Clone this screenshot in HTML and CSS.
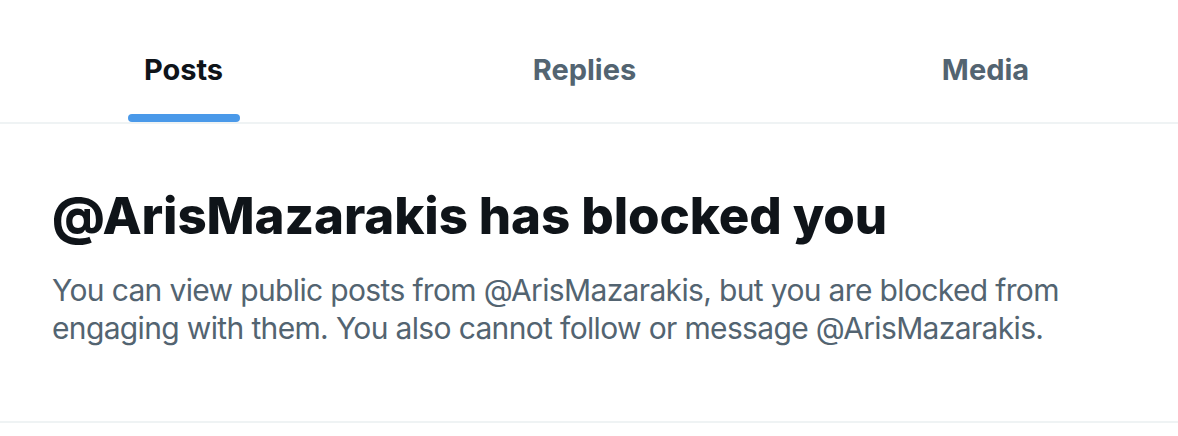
FILE: index.html
```html
<!DOCTYPE html>
<html lang="en">
<head>
<meta charset="utf-8">
<title>Blocked</title>
<link rel="stylesheet" href="styles.css">
</head>
<body>
<div class="page">
  <nav class="tabs">
    <a class="tab active"><span class="tab-label">Posts</span><span class="indicator"></span></a>
    <a class="tab"><span class="tab-label">Replies</span></a>
    <a class="tab"><span class="tab-label">Media</span></a>
  </nav>
  <section class="empty">
    <h1 class="empty-title">@ArisMazarakis has blocked you</h1>
    <p class="empty-text">You can view public posts from @ArisMazarakis, but you are blocked from engaging with them. You also cannot follow or message @ArisMazarakis.</p>
  </section>
</div>
</body>
</html>
```
FILE: styles.css
```css
html, body {
  margin: 0;
  padding: 0;
  background: #ffffff;
  overflow: hidden;
}
.page {
  width: 1178px;
  height: 436px;
  font-family: Inter, "Liberation Sans", Arial, sans-serif;
  color: #0f1419;
}
.tabs {
  display: grid;
  grid-template-columns: 401px 401px 401px;
  margin-left: -17px;
  height: 122px;
  border-bottom: 2px solid #eff3f4;
}
.tab {
  display: flex;
  flex-direction: column;
  align-items: center;
  padding-top: 52px;
  box-sizing: border-box;
  height: 122px;
}
.tab-label {
  font-size: 29px;
  line-height: 36px;
  font-weight: 700;
  color: #536471;
}
.tab.active .tab-label {
  color: #0f1419;
}
.indicator {
  margin-top: 26px;
  width: 112px;
  height: 8px;
  border-radius: 4px;
  background: #4a99e9;
}
.empty {
  padding: 62px 40px 0 52px;
  height: 299px;
  box-sizing: border-box;
  border-bottom: 2px solid #eff3f4;
}
.empty-title {
  margin: 0 0 25px;
  font-size: 51px;
  line-height: 60px;
  font-weight: 800;
  letter-spacing: -0.1px;
  color: #0f1419;
}
.empty-text {
  margin: 0;
  font-size: 30px;
  line-height: 38px;
  font-weight: 400;
  letter-spacing: -0.65px;
  color: #536471;
  max-width: 1030px;
}
```
